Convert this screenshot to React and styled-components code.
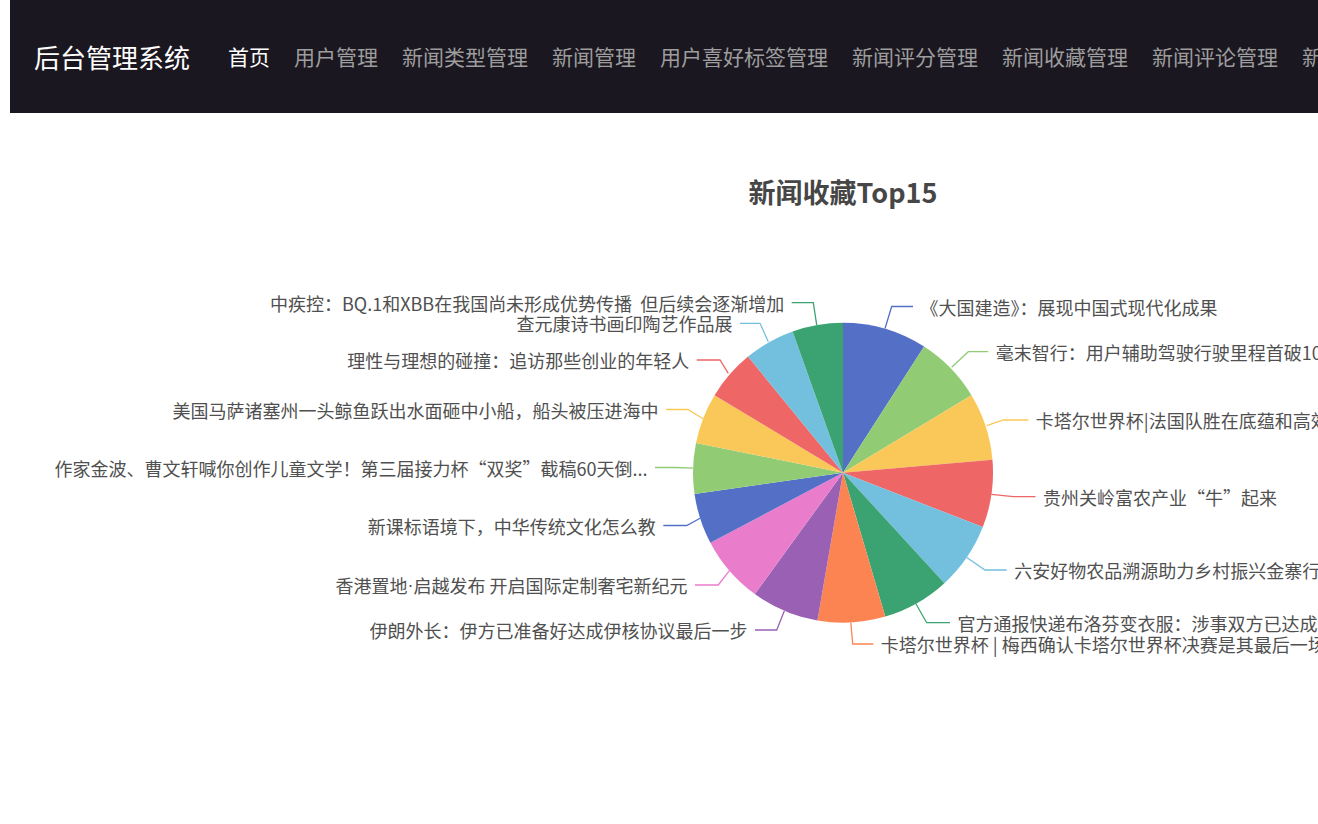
import React from "react";
import styled, { createGlobalStyle } from "styled-components";

const GlobalStyle = createGlobalStyle`
  html, body {
    margin: 0;
    padding: 0;
    overflow: hidden;
    background: #fff;
    font-family: "Microsoft YaHei", "Noto Sans CJK SC", "Noto Sans", sans-serif;
  }
`;

const navItems = [
  "首页",
  "用户管理",
  "新闻类型管理",
  "新闻管理",
  "用户喜好标签管理",
  "新闻评分管理",
  "新闻收藏管理",
  "新闻评论管理",
  "新闻浏览管理"
];

const palette = [
  "#5470c6",
  "#91cc75",
  "#fac858",
  "#ee6666",
  "#73c0de",
  "#3ba272",
  "#fc8452",
  "#9a60b4",
  "#ea7ccc"
];

// chart data, values are collection counts
const CX = 843;
const CY = 472.7;
const R = 150;

const items = [
  {
    value: 5,
    name: "《大国建造》：展现中国式现代化成果",
    line: [[885, 328.5], [891.7, 306.5], [913, 306.5]],
    side: "right"
  },
  {
    value: 4,
    name: "毫末智行：用户辅助驾驶行驶里程首破1000万公里",
    line: [[951.7, 367.3], [968.3, 351.7], [988.3, 351.7]],
    side: "right"
  },
  {
    value: 4,
    name: "卡塔尔世界杯|法国队胜在底蕴和高效",
    line: [[986.7, 425.7], [1003.3, 420], [1028.3, 420]],
    side: "right"
  },
  {
    value: 4,
    name: "贵州关岭富农产业“牛”起来",
    line: [[991.4, 494.4], [1013.3, 496.7], [1035.5, 496.7]],
    side: "right"
  },
  {
    value: 4,
    name: "六安好物农品溯源助力乡村振兴金寨行动",
    line: [[966.8, 557.5], [985, 570], [1006.7, 570]],
    side: "right"
  },
  {
    value: 4,
    name: "官方通报快递布洛芬变衣服：涉事双方已达成和解",
    line: [[915.9, 603.8], [926.7, 622.7], [950, 622.7]],
    side: "right"
  },
  {
    value: 4,
    name: "卡塔尔世界杯 | 梅西确认卡塔尔世界杯决赛是其最后一场比赛",
    line: [[850.8, 622.5], [852.7, 644], [873.3, 644]],
    side: "right"
  },
  {
    value: 4,
    name: "伊朗外长：伊方已准备好达成伊核协议最后一步",
    line: [[784.4, 610.8], [776.7, 630], [755, 630]],
    side: "left"
  },
  {
    value: 4,
    name: "香港置地·启越发布 开启国际定制奢宅新纪元",
    line: [[729.4, 570.7], [718.3, 585], [695, 585]],
    side: "left"
  },
  {
    value: 3,
    name: "新课标语境下，中华传统文化怎么教",
    line: [[700.1, 518.3], [686.7, 525.5], [663.3, 525.5]],
    side: "left"
  },
  {
    value: 3,
    name: "作家金波、曹文轩喊你创作儿童文学！第三届接力杯“双奖”截稿60天倒...",
    line: [[693.1, 468.2], [675, 467.5], [655, 467.5]],
    side: "left"
  },
  {
    value: 3,
    name: "美国马萨诸塞州一头鲸鱼跃出水面砸中小船，船头被压进海中",
    line: [[703, 418.7], [688, 409.5], [666, 409.5]],
    side: "left"
  },
  {
    value: 3,
    name: "理性与理想的碰撞：追访那些创业的年轻人",
    line: [[728.3, 373.3], [720, 360], [696.7, 360]],
    side: "left"
  },
  {
    value: 3,
    name: "查元康诗书画印陶艺作品展",
    line: [[768.3, 341.7], [760, 323.3], [740, 323.3]],
    side: "left"
  },
  {
    value: 3,
    name: "中疾控：BQ.1和XBB在我国尚未形成优势传播  但后续会逐渐增加",
    line: [[816.7, 325], [813.3, 302.7], [791.7, 302.7]],
    side: "left"
  }
];

const polar = deg => {
  const a = (deg * Math.PI) / 180;
  return [CX + R * Math.sin(a), CY - R * Math.cos(a)];
};

const slicePath = (from, to) => {
  const [x1, y1] = polar(from);
  const [x2, y2] = polar(to);
  const large = to - from > 180 ? 1 : 0;
  return `M${CX} ${CY} L${x1} ${y1} A${R} ${R} 0 ${large} 1 ${x2} ${y2} Z`;
};

// the middle dot is narrow in the original font, keep it narrow here too
const renderName = name => {
  const parts = name.split("·");
  if (parts.length === 1) return name;
  return parts.map((p, i) => (
    <React.Fragment key={i}>
      {i > 0 && <NarrowDot>·</NarrowDot>}
      {p}
    </React.Fragment>
  ));
};

const PieChart = () => {
  const total = items.reduce((s, it) => s + it.value, 0);
  let acc = 0;
  const slices = items.map((it, i) => {
    const from = (acc / total) * 360;
    acc += it.value;
    const to = (acc / total) * 360;
    return { ...it, from, to, color: palette[i % palette.length] };
  });

  return (
    <ChartSvg viewBox="10 113 1666 711" width="1666" height="711">
      <ChartTitle x={CX} y={191} textAnchor="middle" dominantBaseline="central">
        新闻收藏Top15
      </ChartTitle>
      {slices.map((s, i) => (
        <path key={"s" + i} d={slicePath(s.from, s.to)} fill={s.color} />
      ))}
      {slices.map((s, i) => {
        const end = s.line[2];
        const tx = s.side === "right" ? end[0] + 7.5 : end[0] - 7.5;
        return (
          <g key={"l" + i}>
            <polyline
              points={s.line.map(p => p.join(",")).join(" ")}
              fill="none"
              stroke={s.color}
              strokeWidth="1.3"
            />
            <LabelText
              x={tx}
              y={end[1]}
              textAnchor={s.side === "right" ? "start" : "end"}
              dominantBaseline="central"
            >
              {renderName(s.name)}
            </LabelText>
          </g>
        );
      })}
    </ChartSvg>
  );
};

const App = () => {
  return (
    <>
      <GlobalStyle />
      <Page>
        <NavBar>
          <Brand>后台管理系统</Brand>
          <NavList>
            {navItems.map((item, i) => (
              <NavLink key={item} active={i === 0}>
                {item}
              </NavLink>
            ))}
          </NavList>
        </NavBar>
        <ChartBox>
          <PieChart />
        </ChartBox>
      </Page>
    </>
  );
};

export default App;

const Page = styled.div`
  width: 1676px;
  padding-left: 10px;
  box-sizing: border-box;
`;

const NavBar = styled.div`
  height: 113px;
  background: #1b1720;
  display: flex;
  align-items: center;
  padding-left: 24px;
  white-space: nowrap;
`;

const Brand = styled.div`
  font-size: 26px;
  color: #fff;
  line-height: 1;
`;

const NavList = styled.div`
  display: flex;
  gap: 24px;
  margin-left: 38px;
`;

const NavLink = styled.span.withConfig({
  shouldForwardProp: p => p !== "active"
})`
  font-size: 21px;
  line-height: 1;
  color: ${p => (p.active ? "#ffffff" : "#9d9d9d")};
  cursor: pointer;
`;

const ChartBox = styled.div`
  width: 1666px;
  height: 711px;
`;

const ChartSvg = styled.svg`
  display: block;
`;

const ChartTitle = styled.text`
  font-size: 27px;
  font-weight: bold;
  fill: #464646;
`;

const LabelText = styled.text`
  font-size: 18px;
  fill: #505050;
  white-space: pre;
`;

const NarrowDot = styled.tspan`
  font-family: "Liberation Sans", sans-serif;
`;
